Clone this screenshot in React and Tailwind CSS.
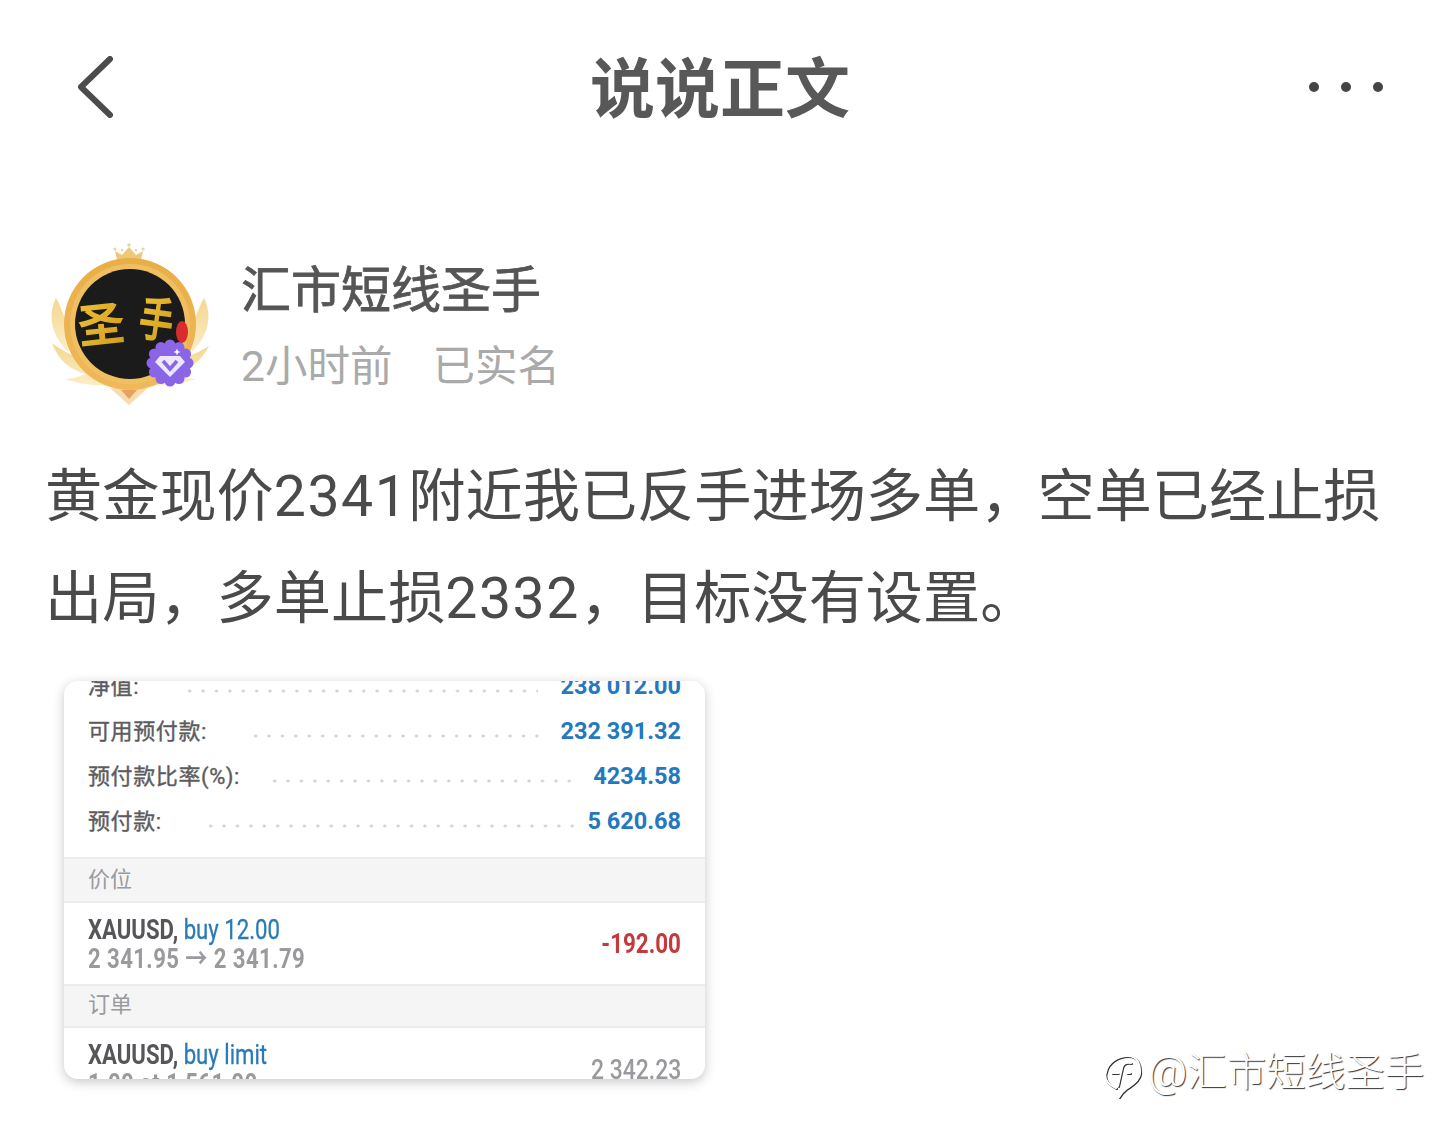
const cjk = "font-['Roboto','Noto_Sans_CJK_SC',sans-serif]";

const summary = [
  { label: "净值:", value: "238 012.00", gapL: "mr-[44px]", gapR: "ml-[22px]" },
  { label: "可用预付款:", value: "232 391.32", gapL: "mr-[42px]", gapR: "ml-[14px]" },
  { label: "预付款比率(%):", value: "4234.58", gapL: "mr-[28px]", gapR: "ml-[14px]" },
  { label: "预付款:", value: "5 620.68", gapL: "mr-[42px]", gapR: "ml-[8px]" },
];

function Avatar() {
  return (
    <svg width="200" height="190" viewBox="0 0 200 190" className="shrink-0 blur-[0.4px]">
      <defs>
        <linearGradient id="wing" x1="0" y1="0" x2="0" y2="1">
          <stop offset="0" stopColor="#f4d68f" />
          <stop offset="1" stopColor="#fbeec8" />
        </linearGradient>
        <linearGradient id="ring" x1="0" y1="0" x2="0" y2="1">
          <stop offset="0" stopColor="#e9ae45" />
          <stop offset="1" stopColor="#f0b85a" />
        </linearGradient>
        <linearGradient id="ink" x1="0" y1="0" x2="1" y2="1">
          <stop offset="0" stopColor="#f0c63a" />
          <stop offset="1" stopColor="#cf9a18" />
        </linearGradient>
      </defs>
      {/* wings */}
      <path d="M26 68 C18 84 20 104 38 122 L44 110 C36 96 34 82 26 68Z" fill="url(#wing)" />
      <path d="M22 113 C28 130 40 140 56 144 C46 148 40 149 34 149 C50 154 66 156 84 156 L60 130 C46 128 34 122 22 113Z" fill="url(#wing)" />
      <path d="M174 68 C182 84 180 104 162 122 L156 110 C164 96 166 82 174 68Z" fill="url(#wing)" />
      <path d="M179 116 C172 130 160 140 146 144 C154 148 160 149 166 149 C150 154 134 156 116 156 L140 130 C154 128 167 124 179 116Z" fill="url(#wing)" />
      {/* bottom point */}
      <path d="M80 158 L99 175 L118 158Z" fill="#f6dcae" />
      <path d="M91 160 L99 169 L107 160Z" fill="#e9a25e" />
      {/* crown */}
      <path d="M87 30 L85 21 L92 25 L99 17 L106 25 L113 21 L111 30Z" fill="#ecc878" />
      <circle cx="85" cy="19" r="1.6" fill="#e9d4a6" />
      <circle cx="92" cy="20" r="1.3" fill="#e9d4a6" />
      <circle cx="99" cy="15" r="1.8" fill="#e9d4a6" />
      <circle cx="106" cy="20" r="1.3" fill="#e9d4a6" />
      <circle cx="113" cy="19" r="1.6" fill="#e9d4a6" />
      {/* medal */}
      <circle cx="100" cy="94" r="66" fill="url(#ring)" />
      <circle cx="100" cy="94" r="60" fill="#efc062" />
      <circle cx="100" cy="94" r="55" fill="#1b1b1c" />
      <text x="71" y="112" textAnchor="middle" fontSize="47" fontWeight="700" fill="url(#ink)" fontFamily="'Noto Sans CJK SC',sans-serif" transform="rotate(-6 71 95)">圣</text>
      <text x="0" y="0" textAnchor="middle" fontSize="48" fontWeight="700" fill="url(#ink)" fontFamily="'Noto Sans CJK SC',sans-serif" transform="translate(124 107) rotate(8) scale(0.72 1)">手</text>
      <ellipse cx="152" cy="102" rx="6" ry="11" fill="#d92c2c" />
      {/* badge */}
      <g>
        <circle cx="140" cy="133" r="20" fill="#8a65e6" />
        {[0, 30, 60, 90, 120, 150, 180, 210, 240, 270, 300, 330].map((a) => (
          <circle key={a} cx={140 + 18 * Math.cos((a * Math.PI) / 180)} cy={133 + 18 * Math.sin((a * Math.PI) / 180)} r="5.5" fill="#8a65e6" />
        ))}
        <path d="M130 126 H150 L155 132 L140 147 L125 132Z" fill="#ece6ff" />
        <path d="M133 131 L140 139 L147 131" fill="none" stroke="#8a65e6" strokeWidth="3.5" />
        <path d="M146 121 l1 -2.5 1 2.5 2.5 1 -2.5 1 -1 2.5 -1 -2.5 -2.5 -1Z" fill="#fff" />
      </g>
    </svg>
  );
}

export default function App() {
  return (
    <div className={`relative h-[1139px] w-full overflow-hidden bg-white ${cjk}`}>
      {/* Header */}
      <div className="flex h-[172px] items-center">
        <div className="flex flex-1 justify-start">
          <svg width="36" height="62" viewBox="0 0 36 62" fill="none" stroke="#4c4c4c" strokeWidth="6" strokeLinecap="round" strokeLinejoin="round" className="mt-[1px] ml-[78px]">
            <path d="M32 3 L3 31 L32 59" />
          </svg>
        </div>
        <div className="pt-[8px] text-[65px] leading-none font-bold text-[#585858]">说说正文</div>
        <div className="flex flex-1 justify-end">
          <div className="mt-[1px] mr-[57px] flex items-center gap-[22px]">
            <span className="size-[10px] rounded-full bg-[#444444]" />
            <span className="size-[10px] rounded-full bg-[#444444]" />
            <span className="size-[10px] rounded-full bg-[#444444]" />
          </div>
        </div>
      </div>

      {/* Author */}
      <div className="mt-[58px] flex items-start pl-[30px]">
        <Avatar />
        <div className="ml-[11px] pt-[28px]">
          <div className="text-[50px] leading-[66px] text-[#555555] [-webkit-text-stroke:0.8px_#555555]">汇市短线圣手</div>
          <div className="mt-[16px] flex text-[42.5px] leading-[54px] text-[#aaaaaa]">
            <span>2小时前</span>
            <span className="ml-[40px]">已实名</span>
          </div>
        </div>
      </div>

      {/* Body */}
      <div className="mt-[26px] pl-[45px] text-[57.2px] leading-[102px] whitespace-nowrap text-[#4a4a4a]">
        <div>黄金现价<span className="tracking-[1.5px]">2341</span>附近我已反手进场多单，空单已经止损</div>
        <div>出局，多单止损<span className="tracking-[1.5px]">2332</span>，目标没有设置。</div>
      </div>

      {/* Screenshot */}
      <div className="mt-[31px] ml-[64px] h-[398px] w-[641px] overflow-hidden rounded-[14px] bg-white shadow-[0_3px_12px_rgba(0,0,0,0.22)]">
        <div className="-mt-[17px] px-[24px] pb-[13px]">
          {summary.map((row) => (
            <div key={row.label} className="flex h-[45px] items-center">
              <span className={`text-[22px] tracking-[0.6px] whitespace-nowrap text-[#5c5c60] [-webkit-text-stroke:0.4px_#5c5c60] ${row.gapL}`}>{row.label}</span>
              <span className="mt-[8px] h-[6px] flex-1 bg-[radial-gradient(circle,#d2d2d2_1.4px,transparent_1.7px)] bg-[length:13.4px_6px] bg-repeat-x" />
              <span className={`text-[23.5px] font-bold whitespace-nowrap text-[#2478bd] ${row.gapR}`}>{row.value}</span>
            </div>
          ))}
        </div>

        <div className="flex h-[46px] items-center border-y-2 border-[#ececec] bg-[#f5f5f5] px-[24px] pb-[2px] text-[22px] text-[#9a9a9e]">价位</div>

        <div className="flex h-[81px] items-center justify-between px-[24px]">
          <div className="origin-left scale-x-[0.82] pt-[2px] text-[27px] leading-[29px] whitespace-nowrap">
            <div>
              <span className="font-bold text-[#55555a]">XAUUSD, </span>
              <span className="text-[#2a7ab5] [-webkit-text-stroke:0.3px_#2a7ab5]">buy 12.00</span>
            </div>
            <div className="font-bold tracking-[0.5px] text-[#9a9a9e]">2 341.95 → 2 341.79</div>
          </div>
          <span className="origin-right scale-x-[0.83] pt-[1px] text-[27px] font-bold text-[#c5393c]">-192.00</span>
        </div>

        <div className="flex h-[44px] items-center border-y-2 border-[#ececec] bg-[#f5f5f5] px-[24px] pb-[3px] text-[22px] text-[#9a9a9e]">订单</div>

        <div className="flex items-start justify-between px-[24px] pt-[13px]">
          <div className="origin-left scale-x-[0.82] text-[27px] leading-[29px] whitespace-nowrap">
            <div>
              <span className="font-bold text-[#55555a]">XAUUSD, </span>
              <span className="text-[#2a7ab5] [-webkit-text-stroke:0.3px_#2a7ab5]">buy limit</span>
            </div>
            <div className="font-bold tracking-[0.5px] text-[#9a9a9e]">1.00 at 1 561.00</div>
          </div>
          <span className="origin-right scale-x-[0.85] pt-[15px] text-[27px] leading-[29px] font-medium text-[#9a9a9e]">2 342.23</span>
        </div>
      </div>

      {/* Watermark */}
      <div className="absolute top-[1048px] left-[1104px] flex items-center">
        <svg width="40" height="52" viewBox="0 0 40 52" fill="none" className="drop-shadow-[1px_1px_0.5px_rgba(0,0,0,0.8)]" stroke="#fff" strokeWidth="2" strokeLinecap="round">
          <path d="M12 40 C3 36 0 30 2 24 C4 14 14 8 24 8 C33 8 37 16 36 26 C35 34 26 38 22 41 C18 44 16 47 15 49" />
          <path d="M14 38 L18 20 C19 15 22 14 27 15" />
          <path d="M8 25 H15" />
          <path d="M23 25 H26" />
        </svg>
        <span className="-mt-[4px] ml-[4px] text-[39.5px] leading-[50px] font-light whitespace-nowrap text-white [text-shadow:1px_1px_1px_rgba(0,0,0,0.8)]">
          <span className="text-[43px]">@</span>汇市短线圣手
        </span>
      </div>
    </div>
  );
}
